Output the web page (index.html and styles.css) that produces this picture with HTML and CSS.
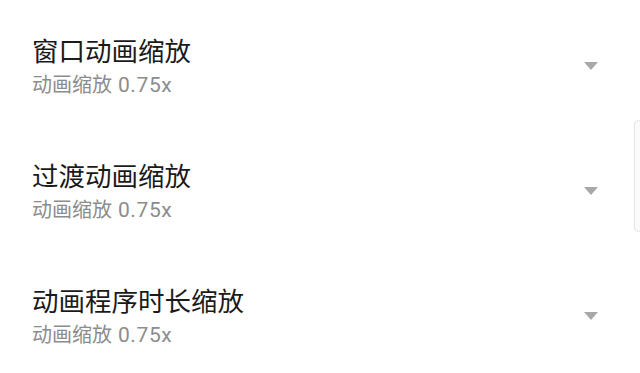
FILE: index.html
```html
<!DOCTYPE html>
<html>
<head>
	<title>动画缩放</title>
	<link rel="stylesheet" href="styles.css">
</head>
<body>
	<div class="list">
		<div class="row">
			<div class="text">
				<div class="title">窗口动画缩放</div>
				<div class="sub">动画缩放 <span class="val">0.75x</span></div>
			</div>
			<span class="arrow"></span>
		</div>
		<div class="row">
			<div class="text">
				<div class="title">过渡动画缩放</div>
				<div class="sub">动画缩放 <span class="val">0.75x</span></div>
			</div>
			<span class="arrow"></span>
		</div>
		<div class="row">
			<div class="text">
				<div class="title">动画程序时长缩放</div>
				<div class="sub">动画缩放 <span class="val">0.75x</span></div>
			</div>
			<span class="arrow"></span>
		</div>
	</div>
	<div class="scrollbar"></div>
</body>
</html>
```

FILE: styles.css
```css
body {
	margin: 0;
	background-color: #fff;
	font-family: Roboto, "Noto Sans CJK SC", sans-serif;
	overflow: hidden;
}

.list {
	display: flex;
	flex-direction: column;
}

.row {
	height: 125px;
	box-sizing: border-box;
	padding: 34px 42px 25px 32px;
	display: flex;
	align-items: center;
	justify-content: space-between;
}

.title {
	font-size: 26.5px;
	line-height: 36px;
	color: #1a1a1a;
}

.sub {
	font-size: 20px;
	line-height: 30px;
	color: #8c8c8c;
	word-spacing: 1px;
}

.sub .val {
	font-size: 21px;
	letter-spacing: 0.6px;
}

.arrow {
	width: 0;
	height: 0;
	border-left: 7px solid transparent;
	border-right: 7px solid transparent;
	border-top: 8px solid #a8a8a8;
	margin-top: -2px;
}

.scrollbar {
	position: absolute;
	right: -3px;
	top: 120px;
	width: 7px;
	height: 110px;
	border: 1px solid #e4e4e4;
	border-radius: 5px;
	background-color: #fafafa;
}
```
